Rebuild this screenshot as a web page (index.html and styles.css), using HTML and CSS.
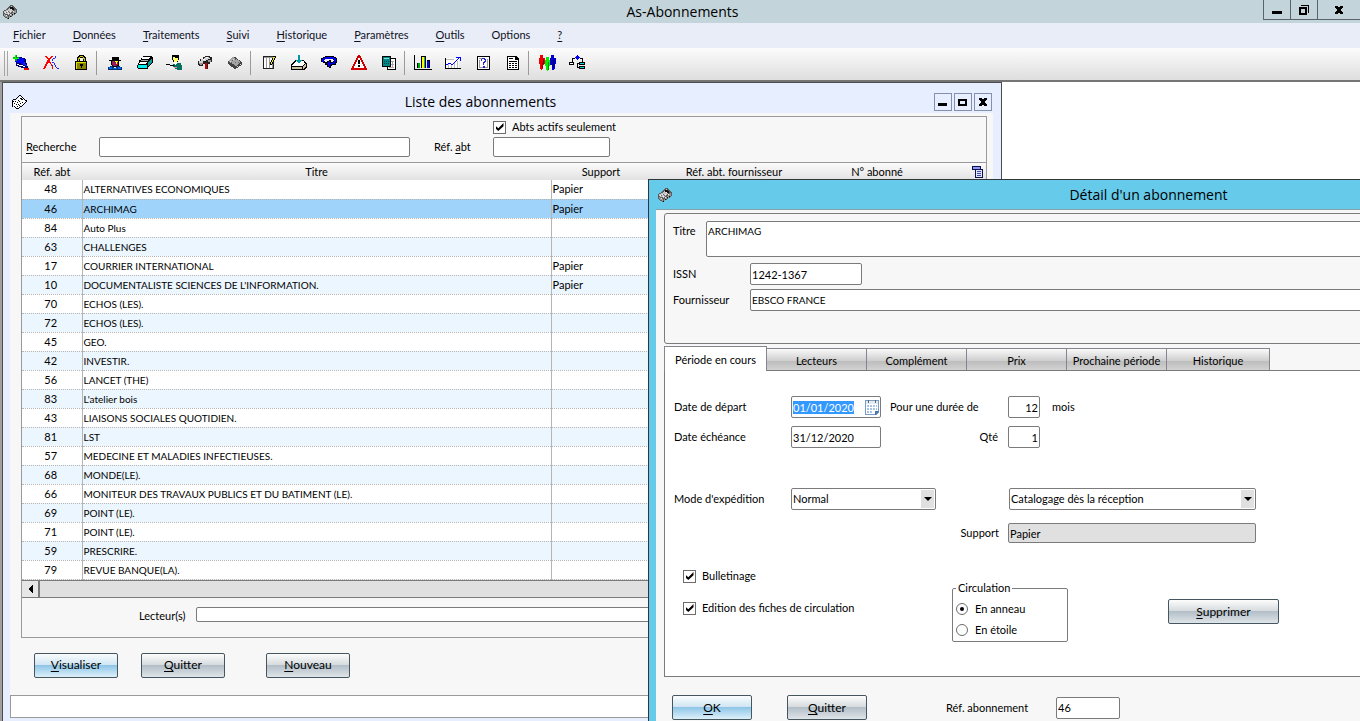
FILE: index.html
```html
<!DOCTYPE html>
<html lang="fr">

<head>
    <meta charset="UTF-8">
    <meta name="viewport" content="width=device-width, initial-scale=1.0">
    <link rel="stylesheet" href="styles.css">
    <title>As-Abonnements</title>
</head>

<body>
    <svg class="defs" aria-hidden="true">
        <symbol id="app-icon" viewBox="0 0 16 16">
            <path fill="#5a5a5a" d="M1 7l4-2 3-4h2l5 5v3l-9 6-5-3z" />
            <path fill="#c4c4c4" d="M2 7l4-1 3-4 4 3-7 6-4-2z" />
            <path fill="#999" d="M2 10l4 2v2l-4-2zM7 12l7-6v3l-7 5z" />
            <path fill="#111" d="M8 3h3v1h1v2h-2V5H8zM6 14h1v1H6zM8 12h1v1H8zM10 10h1v1h-1zM12 9h1v1h-1z" />
            <path fill="#eee" d="M3 8h1v1H3zM5 7h1v1H5zM6 9h1v1H6zM8 7h1v1H8zM9 5h1v1H9zM11 7h1v1h-1zM4 11h1v1H4zM8 10h1v1H8z" />
            <path fill="#666" d="M4 8h1v1H4zM6 7h1v1H6zM7 8h1v1H7zM5 10h1v1H5z" />
        </symbol>
        <symbol id="app-icon-mono" viewBox="0 0 16 16">
            <path fill="#fff" d="M2 6h4l3-4 5 5v2l-7 5-5-3z" />
            <path fill="#000" d="M8 1h2v1h1v1h1v1h1v1h1v1h2v2h-1v1h-1v1h-1V9h1V8h1V7h-1V6h-1V5h-1V4h-1V3h-1V2H8v1H7v1H6v1H5v1H2v1h1v1H2v5H1V6h1V5h3V4h1V3h1V2h1z" />
            <path fill="#000" d="M9 4h2v1h1v1h-2V5H9zM4 7h1v1H4zM6 8h1v1H6zM8 7h1v1H8zM5 10h1v1H5zM7 10h1v1H7zM9 9h1v1H9zM3 9h1v1H3zM3 12h1v1H3zM11 8h1v1h-1zM4 13h1v1H4zM5 14h3v1H5zM8 13h1v1H8zM9 12h1v1H9zM10 13h1v-1h-1zM11 11h1v1h-1zM12 10h1v1h-1zM6 12h1v1H6zM7 6h1v1H7zM8 11h1v1H8z" />
        </symbol>
    </svg>

    <header class="titlebar">
        <svg class="icon-app"><use href="#app-icon" /></svg>
        <h1>As-Abonnements</h1>
        <div class="controls">
            <button type="button" aria-label="Réduire"><svg viewBox="0 0 12 12"><path d="M1 7h10v3H1z" /></svg></button>
            <button type="button" aria-label="Restaurer"><svg viewBox="0 0 12 12"><path fill-rule="evenodd" d="M1 3h8v8H1zM3 5v4h4V5zM3 1h8v8h-1V2H3z" /></svg></button>
            <button type="button" class="close" aria-label="Fermer"><svg viewBox="0 0 12 12"><path d="M2 2h3l1 2 1-2h3v1L8 6l2 3v1H7L6 8l-1 2H2V9l2-3-2-3z" /></svg></button>
        </div>
    </header>

    <nav class="menu">
        <a href="#"><u>F</u>ichier</a>
        <a href="#"><u>D</u>onnées</a>
        <a href="#"><u>T</u>raitements</a>
        <a href="#"><u>S</u>uivi</a>
        <a href="#"><u>H</u>istorique</a>
        <a href="#"><u>P</u>aramètres</a>
        <a href="#"><u>O</u>utils</a>
        <a href="#">Opt<u>i</u>ons</a>
        <a href="#"><u>?</u></a>
    </nav>

    <div class="toolbar">
        <span class="grip"></span>
        <button type="button" aria-label="Abonnement"><svg viewBox="0 0 18 18">
            <path fill="#006" d="M5 3h3l6 2v2l2 6v2h-3l-9-3V8L3 7z" /><path fill="#00f" d="M6 3l7 2-2 5-8-2z" /><path fill="#22f" d="M12 7l3 5-4-1z" /><path fill="#fff" d="M5 10l8 2v1l-8-2z" />
            <path fill="#00a000" d="M3 1h2v2h2v2H5v2H3V5H1V3h2z" /><path fill="#0f0" d="M3 1h1v3h3v1H1V4h2z" /><path fill="#e00" d="M12 14h5v2h-5z" />
        </svg></button>
        <button type="button" aria-label="Lecteurs"><svg viewBox="0 0 18 18">
            <path fill="#f00" d="M3 2h2v1h1v1h2V3h1V2h2v1h-1v1H9v1H8v3h1v2h1v2h1v3h-1v-3H9v-2H8V9H6v1H5v2H4v2H3v1H1v-1h1v-2h1v-2h1V8h1V6h1V5H5V4H4V3H3z" />
            <path fill="#22f" d="M13 2h1v2h-1zM11 4h2v1h-2zM10 5h1v2h-1zM10 8h2v1h-2zM12 9h1v2h-1zM13 11h1v2h-1zM14 13h1v1h-1zM15 14h2v1h-2zM10 11h1v1h-1z" />
        </svg></button>
        <button type="button" aria-label="Verrouiller"><svg viewBox="0 0 18 18">
            <path fill="#000" d="M5 3h1V2h1V1h5v1h1v1h1v5h-3V4H8v4H5z" /><path fill="#cc0" d="M6 4h1V3h1V2h3v1h1v1h1v3h-1V5h-1V3H8v2H7v2H6z" />
            <path fill="#000" d="M3 7h12v9H3z" /><path fill="#888400" d="M4 8h10v7H4z" /><path fill="#dd0" d="M4 8h10v1H5v6H4z" /><path fill="#000" d="M8 10h3v2h-1v2H9v-2H8z" />
        </svg></button>
        <span class="sep"></span>
        <button type="button" aria-label="Fournisseur"><svg viewBox="0 0 18 18">
            <path fill="#000" d="M6 3h7v3h2v1h-2v4l-2 2H7l-2-2V7H3V6h3z" /><path fill="#902060" d="M6 7h6v4l-2 1H8l-2-1z" /><path fill="#ff0" d="M9 7h3v1h-1v2h-1V8H9z" /><path fill="#d00" d="M10 10h2v1h-2z" />
            <path fill="#003070" d="M2 13l4-1 3 2 3-2 4 1v3H2z" /><path fill="#06e" d="M3 13h3v2H3zM7 14h4v1H7zM12 13h3v2h-3z" />
        </svg></button>
        <button type="button" aria-label="Dossiers"><svg viewBox="0 0 18 18">
            <path fill="#000" d="M7 2h9v1h1v5l-5 6v1H2v-1H1v-3h1V9h1V6h2V4h2z" /><path fill="#fff" d="M7 3h7l-2 2H6zM5 6h6v1H5zM4 8h7l-1 2H3z" /><path fill="#aaa" d="M5 6h7v1H5z" /><path fill="#0ee" d="M2 11h9v3H2z" /><path fill="#0a9a9a" d="M12 9l4-5v4l-4 5z" />
        </svg></button>
        <button type="button" aria-label="Bureau"><svg viewBox="0 0 18 18">
            <path fill="#000" d="M6 1h7v5h-1v2h-1v1H8V8H7V6H6z" /><path fill="#ffff60" d="M7 3h2v1h3v3h-1v1H8V6H7z" /><path fill="#087060" d="M8 9h7v2h1v5h-5v-1H8v-2H7v-3h1z" /><path fill="#fff" d="M8 8h3v2h-1v1H9v-1H8z" />
            <path fill="#000" d="M0 10h4v1H0zM4 11h4v1H4z" /><path fill="#eee" d="M1 11h3v1h3v1h2v2H4v1H1z" /><path fill="#f88" d="M8 13h3v1H8z" />
        </svg></button>
        <button type="button" aria-label="Courrier"><svg viewBox="0 0 18 18">
            <path fill="#222" d="M7 3h2V2h5v1h2v5h-2v2h-2v5H9v-5H7v2H3v-1H2V7h2V5h3z" /><path fill="#d0d0d0" d="M9 3h4v1h1v1h-2v1h-2v1H7v2H3V7h2V5h3z" /><path fill="#fff" d="M7 5h2v1H7zM10 3h2v1h-2z" /><path fill="#999" d="M12 6h3v2h-3zM3 9h4v1H6v1H4z" /><path fill="#c00" d="M9 9h2v6H9z" />
        </svg></button>
        <button type="button" aria-label="Bulletins"><svg viewBox="0 0 18 18">
            <path fill="#444" d="M7 3h2l7 5v3l-7 4-7-5V7z" /><path fill="#a5a5a5" d="M7 3l8 5-5 4-8-5z" /><path fill="#666" d="M6 6h1v1H6zM9 5h1v1H9zM9 8h1v1H9zM12 8h1v1h-1zM5 8h1v1H5z" /><path fill="#ddd" d="M4 7h1v1H4zM7 5h1v1H7zM11 12h1v1h-1zM14 10h1v1h-1z" />
        </svg></button>
        <span class="sep"></span>
        <button type="button" aria-label="Saisie"><svg viewBox="0 0 18 18">
            <path fill="#222" d="M3 2h11v13H3z" /><path fill="#fff" d="M4 4h9v10H4z" /><path fill="#999" d="M4 3h9v1H4zM6 4h1v10H6zM9 4h1v10H9zM12 9h1v5h-1z" /><path fill="#000" d="M13 2h3v2h-1v2h-1v2h-1v2h-1v1h-2V8h1V6h1V4h1z" /><path fill="#ee0" d="M13 3h2v1h-1v2h-1v2h-1v2h-1V8h1V6h1z" />
        </svg></button>
        <button type="button" aria-label="Réception"><svg viewBox="0 0 18 18">
            <path fill="#000" d="M5 6h9l3 4v3l-3 3H1v-5z" /><path fill="#fff" d="M6 7h8l1 3-3 2H2z" /><path fill="#c8c0a0" d="M2 13h10v2H2zM13 12l3-2v2l-3 3z" /><path fill="#0099a8" d="M8 1h2v5h2v1h-1v1h-1v1H8V8H7V7H6V6h2z" />
        </svg></button>
        <button type="button" aria-label="Renouveler"><svg viewBox="0 0 18 18">
            <path fill="#000" d="M5 2h9v1h2v1h1v5h-1v2h-4v1h-1v2H9v-1H7v-2H5V9H3V8H1V4h2V3h2z" /><path fill="#eee" d="M5 5h8v1h1v1h-1v1h-2V6H9v1H7v1H5V7H4V6h1z" /><path fill="#00e" d="M5 3h9v1h2v4h-1v2h-4v1h-1v2H9v-1H8v-2H7V9h1V8h1V7h1v2h3V8h1V5H5v1H4v2H2V5h1V4h2z" />
        </svg></button>
        <button type="button" aria-label="Alertes"><svg viewBox="0 0 18 18">
            <path fill="#d00000" d="M8 1h2v1h1v2h1v2h1v2h1v2h1v2h1v2h1v2H1v-2h1v-2h1v-2h1V8h1V6h1V4h1V2h1z" /><path fill="#fff" d="M8 4h2v2h1v2h1v2h1v2h1v2H4v-2h1v-2h1V8h1V6h1z" /><path fill="#000" d="M8 6h2v4H8zM8 11h2v2H8z" />
        </svg></button>
        <button type="button" aria-label="Calcul"><svg viewBox="0 0 18 18">
            <path fill="#000" d="M2 2h9v2h5v12H7v-3H2z" /><path fill="#fff" d="M11 5h4v10H8v-2h3z" /><path fill="#aaa" d="M11 7h3v1h-3zM12 7h1v6h-1zM11 10h3v1h-3zM9 13h5v1H9z" /><path fill="#088" d="M3 3h7v9H3z" /><path fill="#8dd" d="M4 4h5v1H4z" /><path fill="#044" d="M4 7h1v1H4zM6 7h1v1H6zM8 7h1v1H8zM4 9h1v1H4zM6 9h1v1H6zM8 9h1v1H8z" />
        </svg></button>
        <span class="sep"></span>
        <button type="button" aria-label="Statistiques"><svg viewBox="0 0 18 18">
            <path fill="#000" d="M0 1h1v14h17v1H0zM3 9h3v5H3zM7 2h5v12H7zM13 6h3v8h-3z" /><path fill="#0a0" d="M4 9h2v5H4z" /><path fill="#ff0" d="M8 3h2v11H8z" /><path fill="#0aa" d="M10 3h1v11h-1z" /><path fill="#00f" d="M13 7h2v7h-2z" />
        </svg></button>
        <button type="button" aria-label="Évolution"><svg viewBox="0 0 18 18">
            <path fill="#fff" d="M2 4h13v10H2z" /><path fill="#bbb" d="M4 10h1v4H4zM7 10h1v4H7zM10 8h1v6h-1zM13 7h1v7h-1zM2 5h8v1H2z" /><path fill="#000" d="M1 4h1v10h15v1H1z" /><path fill="#00f" d="M2 10h2v1H2zM4 9h3v1H4zM7 10h2V9h1v1H9v1H7zM10 8h1v1h-1zM11 7h1v1h-1zM12 6h1v1h-1zM13 5h1v1h-1zM14 4h1v1h-1zM12 3h5v4h-1V4h-4z" />
        </svg></button>
        <button type="button" aria-label="Aide"><svg viewBox="0 0 18 18">
            <path fill="#000" d="M3 2h13v14H3z" /><path fill="#fff" d="M4 3h11v12H4z" /><path fill="#999" d="M5 4h3v1H5zM5 6h1v7H5zM13 5h1v8h-1zM5 13h9v1H5z" /><path fill="#22c" d="M8 4h3v1h1v3h-1v1h-1v2H9V8h1V7h1V6h-1V5H8v2H7V5h1zM9 12h2v2H9z" />
        </svg></button>
        <button type="button" aria-label="État"><svg viewBox="0 0 18 18">
            <path fill="#000" d="M3 2h9l3 3v11H3z" /><path fill="#fff" d="M4 3h7v3h3v9H4z" /><path fill="#000" d="M5 4h4v1H5zM5 7h8v1H5zM5 9h2v1H5zM8 9h2v1H8zM11 9h2v1h-2zM5 11h2v1H5zM8 11h2v1H8zM11 11h2v1h-2zM5 13h2v1H5zM8 13h2v1H8zM11 13h2v1h-2z" />
        </svg></button>
        <span class="sep"></span>
        <button type="button" aria-label="Groupes"><svg viewBox="0 0 18 18">
            <path fill="#e00" d="M2 1h3v3H2zM1 4h6v6H6v1H5v4H4v1H3v-1H2v-5H1z" /><path fill="#00c" d="M13 1h3v3h-3zM12 4h6v6h-1v5h-1v1h-2v-5h-2z" /><path fill="#0e0" d="M8 3h3v3H8zM7 6h5v6h-1v4h-1v1H9v-1H8v-4H7z" /><path fill="#800" d="M5 5h1v5H5v4H4V9h1z" /><path fill="#006" d="M15 6h1v8h-1z" /><path fill="#080" d="M10 8h1v8h-1z" />
        </svg></button>
        <button type="button" aria-label="Organigramme"><svg viewBox="0 0 18 18">
            <path fill="#00f" d="M9 1h1v1h1v1h1v1h-1v1h-1v1H9V5H8V4H7V3h1V2h1z" /><path fill="#000" d="M4 4h3v1H5v3H4zM12 4h3v4h-1V5h-2zM1 8h5v3H1zM11 8h6v3h-6zM11 12h6v3h-6zM9 9h2v1h-1v3h1v1H9z" /><path fill="#fff" d="M2 9h3v1H2z" /><path fill="#0dd" d="M12 9h4v1h-4zM12 13h4v1h-4z" />
        </svg></button>
    </div>

    <main class="desktop">
        <section class="window list-window">
            <div class="window-title">
                <svg class="icon-app"><use href="#app-icon-mono" /></svg>
                <h2>Liste des abonnements</h2>
                <div class="child-controls">
                    <button type="button" aria-label="Réduire la liste"><svg viewBox="0 0 12 12"><path d="M1 7h9v3H1z" /></svg></button>
                    <button type="button" aria-label="Agrandir la liste"><svg viewBox="0 0 12 12"><path fill-rule="evenodd" d="M1 3h9v7H1zM3 5v3h5V5z" /></svg></button>
                    <button type="button" aria-label="Fermer la liste"><svg viewBox="0 0 12 12"><path d="M2 2h3l1 2 1-2h3v1L8 6l2 3v1H7L6 8l-1 2H2V9l2-3-2-3z" /></svg></button>
                </div>
            </div>
            <div class="list-content">
                <div class="list-panel">
                    <div class="search">
                        <label class="check actifs"><input type="checkbox" checked>Abts actifs seulement</label>
                        <label for="recherche"><u>R</u>echerche</label>
                        <input type="text" id="recherche">
                        <label for="refabt">Réf. <u>a</u>bt</label>
                        <input type="text" id="refabt">
                    </div>
                    <table>
                        <colgroup>
                            <col class="c-ref">
                            <col class="c-titre">
                            <col class="c-support">
                            <col class="c-four">
                            <col class="c-num">
                            <col>
                        </colgroup>
                        <thead>
                            <tr>
                                <th>Réf. abt</th>
                                <th>Titre</th>
                                <th>Support</th>
                                <th>Réf. abt. fournisseur</th>
                                <th>N° abonné</th>
                                <th class="pick"><svg viewBox="0 0 12 13"><path fill="#114" d="M0 1h9v3h2v9H3V5H0z" /><path fill="#89f" d="M1 2h7v2H1z" /><path fill="#dde6ff" d="M4 5h6v7H4z" /><path fill="#44a" d="M5 6h4v1H5zM5 8h4v1H5zM5 10h4v1H5z" /></svg></th>
                            </tr>
                        </thead>
                        <tbody>
                            <tr><td>48</td><td>ALTERNATIVES ECONOMIQUES</td><td>Papier</td><td></td><td></td><td></td></tr>
                            <tr class="selected"><td>46</td><td>ARCHIMAG</td><td>Papier</td><td></td><td></td><td></td></tr>
                            <tr><td>84</td><td>Auto Plus</td><td></td><td></td><td></td><td></td></tr>
                            <tr><td>63</td><td>CHALLENGES</td><td></td><td></td><td></td><td></td></tr>
                            <tr><td>17</td><td>COURRIER INTERNATIONAL</td><td>Papier</td><td></td><td></td><td></td></tr>
                            <tr><td>10</td><td>DOCUMENTALISTE SCIENCES DE L'INFORMATION.</td><td>Papier</td><td></td><td></td><td></td></tr>
                            <tr><td>70</td><td>ECHOS (LES).</td><td></td><td></td><td></td><td></td></tr>
                            <tr><td>72</td><td>ECHOS (LES).</td><td></td><td></td><td></td><td></td></tr>
                            <tr><td>45</td><td>GEO.</td><td></td><td></td><td></td><td></td></tr>
                            <tr><td>42</td><td>INVESTIR.</td><td></td><td></td><td></td><td></td></tr>
                            <tr><td>56</td><td>LANCET (THE)</td><td></td><td></td><td></td><td></td></tr>
                            <tr><td>83</td><td>L'atelier bois</td><td></td><td></td><td></td><td></td></tr>
                            <tr><td>43</td><td>LIAISONS SOCIALES QUOTIDIEN.</td><td></td><td></td><td></td><td></td></tr>
                            <tr><td>81</td><td>LST</td><td></td><td></td><td></td><td></td></tr>
                            <tr><td>57</td><td>MEDECINE ET MALADIES INFECTIEUSES.</td><td></td><td></td><td></td><td></td></tr>
                            <tr><td>68</td><td>MONDE(LE).</td><td></td><td></td><td></td><td></td></tr>
                            <tr><td>66</td><td>MONITEUR DES TRAVAUX PUBLICS ET DU BATIMENT (LE).</td><td></td><td></td><td></td><td></td></tr>
                            <tr><td>69</td><td>POINT (LE).</td><td></td><td></td><td></td><td></td></tr>
                            <tr><td>71</td><td>POINT (LE).</td><td></td><td></td><td></td><td></td></tr>
                            <tr><td>59</td><td>PRESCRIRE.</td><td></td><td></td><td></td><td></td></tr>
                            <tr><td>79</td><td>REVUE BANQUE(LA).</td><td></td><td></td><td></td><td></td></tr>
                        </tbody>
                    </table>
                    <div class="scrollbar">
                        <button type="button" aria-label="Défiler à gauche"><svg viewBox="0 0 5 8"><path d="M5 0v8L0 4z" /></svg></button>
                        <span class="thumb"></span>
                    </div>
                    <div class="lecteurs">
                        <label for="lecteurs">Lecteur(s)</label>
                        <input type="text" id="lecteurs">
                    </div>
                </div>
                <div class="list-buttons">
                    <button type="button" class="btn primary"><u>V</u>isualiser</button>
                    <button type="button" class="btn"><u>Q</u>uitter</button>
                    <button type="button" class="btn"><u>N</u>ouveau</button>
                </div>
                <div class="status"></div>
            </div>
        </section>

        <section class="window detail-window">
            <div class="window-title">
                <svg class="icon-app"><use href="#app-icon" /></svg>
                <h2>Détail d'un abonnement</h2>
            </div>
            <form class="detail-content">
                <div class="identity">
                    <div class="row">
                        <label for="titre" class="l-titre">Titre</label>
                        <textarea id="titre" class="caps">ARCHIMAG</textarea>
                    </div>
                    <div class="row">
                        <label for="issn" class="l-ident">ISSN</label>
                        <input type="text" id="issn" class="w-issn" value="1242-1367">
                    </div>
                    <div class="row">
                        <label for="fournisseur" class="l-ident">Fournisseur</label>
                        <input type="text" id="fournisseur" class="grow caps" value="EBSCO FRANCE">
                    </div>
                </div>

                <div class="tabs">
                    <button type="button" class="tab active">Période en cours</button>
                    <button type="button" class="tab">Lecteurs</button>
                    <button type="button" class="tab">Complément</button>
                    <button type="button" class="tab">Prix</button>
                    <button type="button" class="tab">Prochaine période</button>
                    <button type="button" class="tab">Historique</button>
                </div>

                <div class="tab-panel">
                    <div class="row">
                        <label for="depart" class="l-main">Date de départ</label>
                        <span class="date">
                            <input type="text" id="depart" class="w-date" value="01/01/2020">
                            <svg viewBox="0 0 15 16"><path fill="#7a9cc0" d="M0 1h14v12l-3 3H0z" /><path fill="#fff" d="M1 5h12v7l-3 3H1z" /><path fill="#e4ebf2" d="M1 2h12v3H1z" /><path fill="#567" d="M3 1h1v3H3zM10 1h1v3h-1z" /><path fill="#a9c4ea" d="M2 6h2v2H2zM5 6h2v2H5zM8 6h2v2H8zM11 6h1v2h-1zM2 9h2v2H2zM5 9h2v2H5zM8 9h2v2H8zM11 9h1v2h-1zM2 12h2v2H2zM5 12h2v2H5z" /><path fill="#4478b8" d="M10 12h4l-4 4z" /></svg>
                        </span>
                        <label for="duree" class="l-duree">Pour une durée de</label>
                        <input type="text" id="duree" class="w-num" value="12">
                        <span class="unit">mois</span>
                    </div>
                    <div class="row">
                        <label for="echeance" class="l-main">Date échéance</label>
                        <input type="text" id="echeance" class="w-date" value="31/12/2020">
                        <label for="qte" class="l-qte">Qté</label>
                        <input type="text" id="qte" class="w-num" value="1">
                    </div>
                    <div class="row row-mode">
                        <label for="mode" class="l-main">Mode d'expédition</label>
                        <span class="select w-mode"><select id="mode"><option>Normal</option></select></span>
                        <span class="select w-catalogue"><select aria-label="Catalogage"><option>Catalogage dès la réception</option></select></span>
                    </div>
                    <div class="row row-support">
                        <label for="support" class="l-support">Support</label>
                        <input type="text" id="support" value="Papier" readonly>
                    </div>
                    <div class="options">
                        <div class="checks">
                            <label class="check"><input type="checkbox" checked>Bulletinage</label>
                            <label class="check"><input type="checkbox" checked>Edition des fiches de circulation</label>
                        </div>
                        <fieldset>
                            <legend>Circulation</legend>
                            <label class="check"><input type="radio" name="circulation" checked>En anneau</label>
                            <label class="check"><input type="radio" name="circulation">En étoile</label>
                        </fieldset>
                        <button type="button" class="btn supprimer"><u>S</u>upprimer</button>
                    </div>
                </div>

                <div class="detail-buttons">
                    <button type="button" class="btn primary"><u>O</u>K</button>
                    <button type="button" class="btn"><u>Q</u>uitter</button>
                    <label for="refabo">Réf. abonnement</label>
                    <input type="text" id="refabo" value="46">
                </div>
            </form>
        </section>
    </main>
    <script>
        const depart = document.getElementById("depart");
        depart.focus();
        depart.select();
    </script>
</body>

</html>
```

FILE: styles.css
```css
* {
    box-sizing: border-box;
}

body {
    margin: 0;
    height: 100vh;
    display: flex;
    flex-direction: column;
    overflow: hidden;
    background: #fff;
    color: #000;
    font: 11px/14px Lato, "Open Sans", sans-serif;
}

button,
input,
select,
textarea {
    margin: 0;
    font: inherit;
    color: inherit;
    outline: none;
}

button {
    padding: 0;
}

u {
    text-underline-offset: 2px;
}

svg {
    display: block;
    shape-rendering: crispEdges;
}

.defs {
    position: absolute;
    width: 0;
    height: 0;
}

.icon-app {
    width: 16px;
    height: 16px;
}

h1,
h2 {
    flex: 1;
    margin: 0;
    text-align: center;
    font: 14px/20px "Open Sans", sans-serif;
}

/* fenêtre principale */
.titlebar {
    flex: none;
    display: flex;
    align-items: center;
    height: 23px;
    padding-left: 2px;
    background: #c3d5db;
}

.titlebar h1 {
    padding-left: 84px;
}

.controls {
    display: flex;
    align-self: flex-start;
}

.controls button {
    display: flex;
    justify-content: center;
    align-items: center;
    width: 27px;
    height: 20px;
    border: solid #59636d;
    border-width: 0 0 1px 1px;
    background: none;
}

.controls .close {
    width: 43px;
}

.controls svg,
.child-controls svg {
    width: 12px;
    height: 12px;
}

.menu {
    flex: none;
    display: flex;
    align-items: center;
    gap: 27px;
    height: 25px;
    padding: 0 13px 2px;
    background: #e8edf8;
}

.menu a {
    color: #112;
    text-decoration: none;
}

.toolbar {
    flex: none;
    display: flex;
    height: 34px;
    padding-bottom: 2px;
    border-bottom: 2px solid #757575;
    background: linear-gradient(#fcfcfc, #dedede);
}

.toolbar button {
    display: flex;
    justify-content: center;
    align-items: center;
    width: 30px;
    border: 0;
    background: none;
}

.toolbar button svg {
    width: 18px;
    height: 18px;
}

.grip {
    width: 4px;
    margin: 3px -2px 2px 4px;
    border: solid #a5a5a5;
    border-width: 0 1px;
}

.sep {
    width: 1px;
    margin: 3px 3px 3px 0;
    background: #9a9a9a;
}

.desktop {
    flex: 1;
    position: relative;
    overflow: hidden;
    border-left: 2px solid #a0a0a0;
}

/* fenêtres filles */
.window {
    position: absolute;
    display: flex;
    flex-direction: column;
}

.window-title {
    display: flex;
    align-items: center;
    flex: none;
}

.list-window {
    top: 0;
    left: 0;
    width: 1000px;
    padding: 0 8px 4px 7px;
    border: 1px solid #4c4c4c;
    background: #e7eeff;
}

.list-window .window-title {
    height: 30px;
    padding: 7px 1px 0;
}

.child-controls {
    display: flex;
    gap: 2px;
}

.child-controls button {
    display: flex;
    justify-content: center;
    align-items: center;
    width: 18px;
    height: 18px;
    border: 1px solid #8490ae;
    background: none;
}

.list-content {
    padding-top: 3px;
    background: #f7f7f7;
}

.list-panel {
    margin: 0 6px 0 11px;
    border: 1px solid #9a9a9a;
}

.search {
    display: grid;
    grid-template-columns: 73px 335px 59px 117px;
    grid-template-rows: 20px 20px;
    align-items: center;
    height: 46px;
    padding-left: 4px;
    border-bottom: 1px solid #9a9a9a;
}

input[type=text],
textarea {
    min-width: 0;
    height: 22px;
    padding: 0 1px;
    border: 1px solid #7b7b7b;
    border-radius: 2px;
    background: #fff;
}

.search input[type=text] {
    height: 20px;
}

#recherche {
    width: 311px;
}

.actifs {
    grid-column: 4 / span 2;
}

.check {
    display: flex;
    align-items: center;
    gap: 6px;
    white-space: nowrap;
}

input[type=checkbox],
input[type=radio] {
    appearance: none;
    display: grid;
    place-content: center;
    flex: none;
    width: 13px;
    height: 13px;
    border: 1px solid #6c6c6c;
    background: #fff;
}

input[type=radio] {
    width: 12px;
    height: 12px;
    border-radius: 50%;
}

input[type=checkbox]:checked::before {
    content: "";
    width: 8px;
    height: 8px;
    background: #000;
    clip-path: polygon(0 35%, 35% 65%, 100% 0, 100% 40%, 35% 100%, 0 70%);
}

input[type=radio]:checked::before {
    content: "";
    width: 4px;
    height: 4px;
    border-radius: 50%;
    background: #000;
}

table {
    width: 100%;
    table-layout: fixed;
    border-collapse: collapse;
}

.c-ref {
    width: 60px;
}

.c-titre {
    width: 469px;
}

.c-support {
    width: 100px;
}

.c-four {
    width: 166px;
}

.c-num {
    width: 120px;
}

th {
    height: 17px;
    padding: 0;
    font-weight: normal;
    background: linear-gradient(#fbfbfb, #e2e2e2);
}

.pick svg {
    width: 12px;
    height: 13px;
    margin-left: 35px;
}

td {
    height: 19px;
    padding: 0 1px;
    border-bottom: 1px dotted #b5b5b5;
    background: #fff;
    line-height: 14px;
    white-space: nowrap;
}

td:first-child {
    padding-right: 3px;
    text-align: center;
}

td:nth-child(2),
td:nth-child(3) {
    border-left: 1px solid #b5b5b5;
}

td:nth-child(2),
.caps {
    font-size: 10px;
}

tr:nth-child(even) td {
    background: #ecf6fe;
}

tr.selected td {
    background: #9fd3fa;
}

.scrollbar {
    display: flex;
    height: 18px;
    border: solid #7b7b7b;
    border-width: 1px 0;
    background: #e0e0e0;
}

.scrollbar button {
    display: flex;
    align-items: center;
    justify-content: center;
    width: 16px;
    border: 0;
    background: #e6e6e6;
}

.scrollbar svg {
    width: 5px;
    height: 8px;
}

.thumb {
    flex: 1;
    border-left: 2px solid #7b7b7b;
}

.lecteurs {
    display: flex;
    align-items: center;
    gap: 11px;
    height: 39px;
    padding: 0 12px 2px 117px;
}

.lecteurs input[type=text] {
    flex: 1;
    height: 15px;
    margin-bottom: 4px;
}

.btn {
    height: 25px;
    border: 1px solid #46565e;
    border-radius: 2px;
    background: linear-gradient(#fdfdfd, #d5dadc 48%, #b3bec8 50%, #dfe5e8);
    font-size: 12px;
    line-height: 16px;
}

.btn.primary {
    background: linear-gradient(#fafdfe, #cfe5f2 48%, #8fc6e8 50%, #def0fa);
}

.list-buttons {
    display: flex;
    gap: 23px;
    padding: 15px 24px 17px;
}

.list-buttons .btn {
    width: 84px;
}

.list-buttons .btn:last-child {
    margin-left: 18px;
}

.status {
    height: 23px;
    border: 1px solid #9a9a9a;
    background: #fff;
}

/* détail d'un abonnement */
.detail-window {
    top: 97px;
    left: 646px;
    width: 984px;
    padding: 0 7px;
    border: 1px solid #30363a;
    background: #66caea;
}

.detail-window .window-title {
    height: 29px;
    padding-left: 1px;
}

.detail-content {
    padding: 3px 8px 8px;
    border-top: 1px solid #8aa0a8;
    background: #f7f7f7;
}

.row {
    display: flex;
    align-items: center;
}

.identity {
    display: flex;
    flex-direction: column;
    gap: 4px;
    height: 131px;
    padding: 7px 8px;
    border: 1px solid #7b7b7b;
    border-radius: 3px;
}

.identity .row:first-child {
    margin-bottom: 2px;
    align-items: flex-start;
}

.l-titre {
    width: 33px;
    padding-top: 3px;
}

#titre {
    flex: 1;
    height: 36px;
    padding: 2px 1px;
    resize: none;
}

.l-ident {
    width: 77px;
}

.w-issn {
    width: 112px;
}

.grow {
    flex: 1;
}

.tabs {
    display: flex;
    align-items: flex-end;
    margin-top: 2px;
}

.tab {
    width: 100px;
    height: 22px;
    padding-top: 2px;
    border: 1px solid #85858f;
    border-width: 1px 1px 0 0;
    background: linear-gradient(#fafafa, #cfcfcf 55%, #bdbdbd 60%, #d2d2d2);
}

.tab.active {
    position: relative;
    width: 103px;
    height: 25px;
    margin-bottom: -1px;
    border-left-width: 1px;
    background: #fff;
}

.tab:last-child {
    width: 103px;
}

.tab-panel {
    display: flex;
    flex-direction: column;
    gap: 8px;
    height: 307px;
    padding: 25px 9px;
    border: 1px solid #7b7b7b;
    background: #fff;
}

.l-main {
    width: 117px;
}

.date {
    position: relative;
}

.date svg {
    position: absolute;
    top: 3px;
    right: 1px;
    width: 15px;
    height: 16px;
}

.w-date {
    display: block;
    width: 90px;
}

#depart::selection {
    background: #3399ff;
    color: #fff;
}

.l-duree {
    width: 127px;
    padding-left: 9px;
}

.l-qte {
    width: 127px;
    padding-right: 10px;
    text-align: right;
}

.w-num {
    width: 32px;
    text-align: right;
}

.unit {
    padding-left: 12px;
}

.row-mode {
    margin-top: 32px;
}

.row-support {
    margin-top: 5px;
}

.select {
    position: relative;
}

.select::after {
    content: "";
    position: absolute;
    top: 9px;
    right: 4px;
    border: solid transparent;
    border-width: 4px 4px 0;
    border-top-color: #000;
    pointer-events: none;
}

select {
    display: block;
    width: 100%;
    height: 22px;
    padding: 0 1px;
    appearance: none;
    border: 1px solid #7b7b7b;
    border-radius: 2px;
    background: linear-gradient(#e0e0e0, #e0e0e0) right 1px center / 13px 18px no-repeat #fff;
}

.w-mode {
    width: 145px;
}

.w-catalogue {
    width: 247px;
    margin-left: 73px;
}

.l-support {
    width: 334px;
    padding-right: 9px;
    text-align: right;
}

#support {
    width: 248px;
    height: 20px;
    background: #e0e0e0;
}

.options {
    display: flex;
    align-items: flex-start;
    margin: 18px 0 0 9px;
}

.checks {
    display: flex;
    flex-direction: column;
    gap: 18px;
    width: 269px;
}

fieldset {
    display: flex;
    flex-direction: column;
    gap: 7px;
    width: 116px;
    height: 61px;
    margin: 12px 0 0;
    padding: 7px 3px 0;
    border: 1px solid #7b7b7b;
    border-radius: 2px;
}

legend {
    padding: 0 2px;
}

fieldset .check {
    gap: 7px;
}

.supprimer {
    width: 111px;
    margin: 30px 0 0 100px;
}

.detail-buttons {
    display: flex;
    align-items: center;
    padding: 18px 8px 0;
}

.detail-buttons .btn {
    width: 80px;
    margin-right: 35px;
}

.detail-buttons label {
    width: 110px;
    margin-left: 44px;
}

#refabo {
    width: 64px;
}
```
